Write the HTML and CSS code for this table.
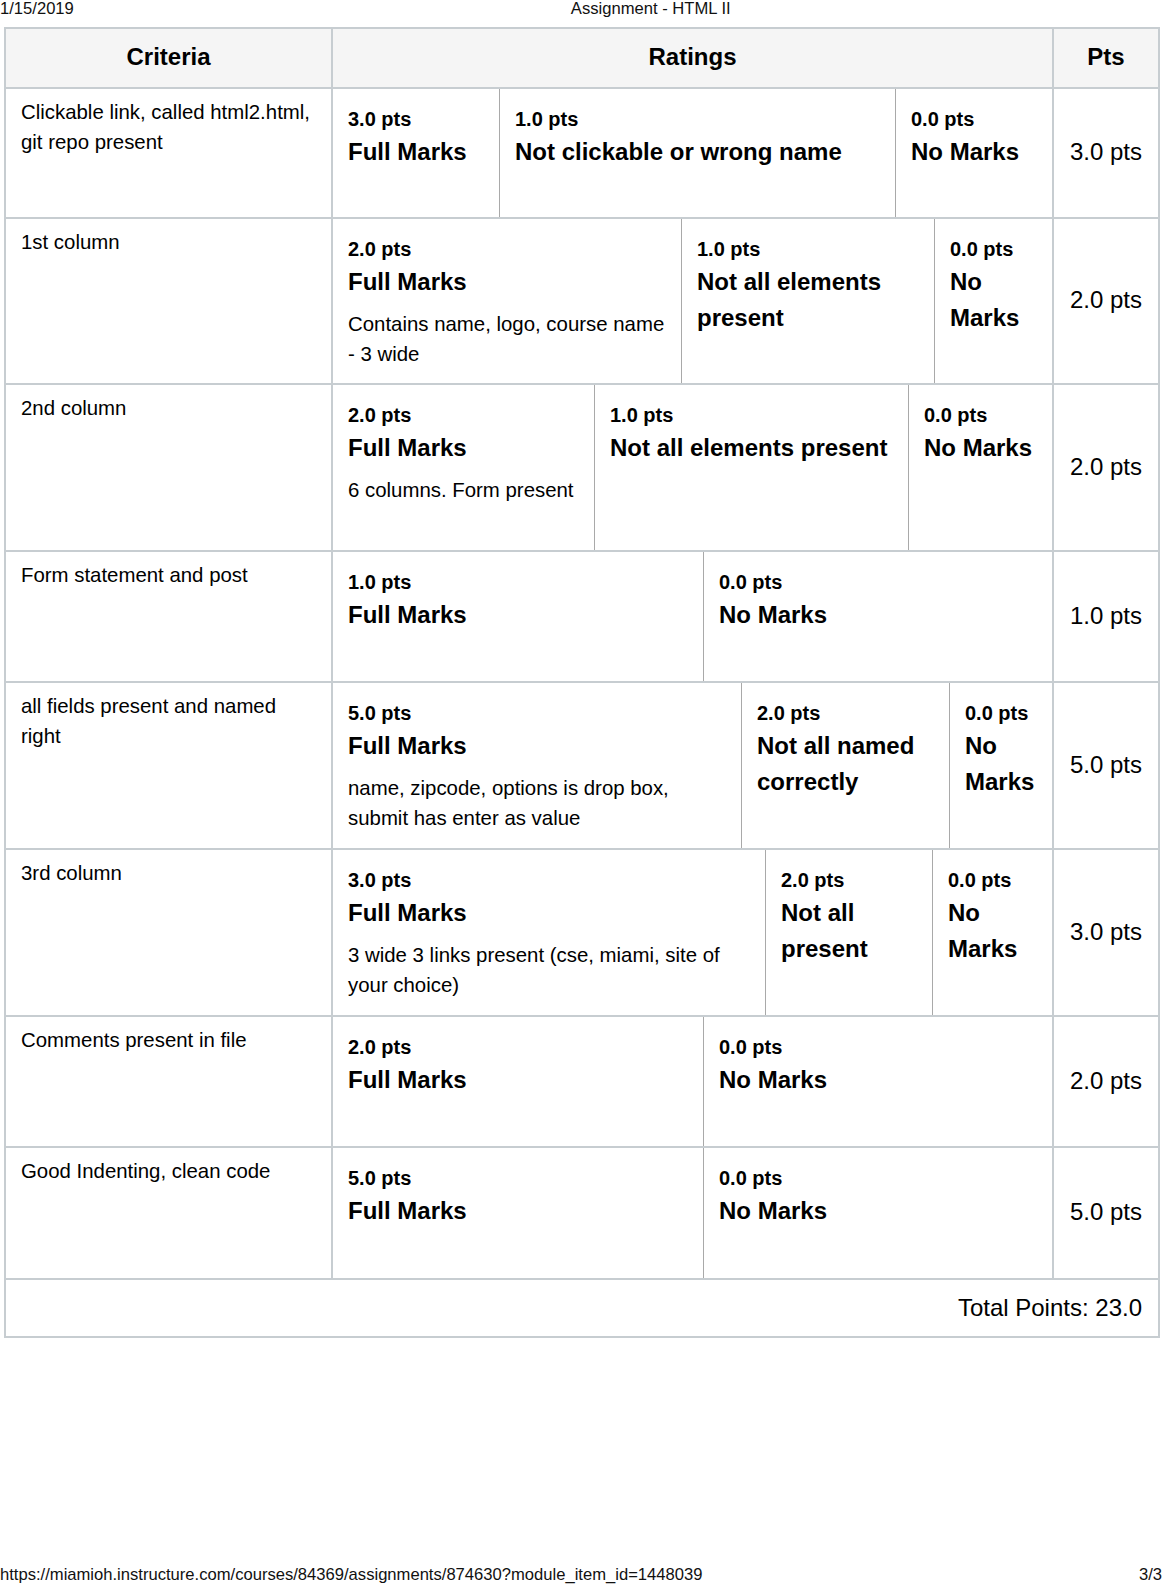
FILE: index.html
```html
<!DOCTYPE html>
<html lang="en">
<head>
<meta charset="utf-8">
<title>Assignment - HTML II</title>
<link rel="stylesheet" href="styles.css">
</head>
<body>
<div class="page">
  <header class="print-header">
    <span class="print-date">1/15/2019</span>
    <span class="print-title">Assignment - HTML II</span>
  </header>

  <div class="rubric">
    <div class="th">Criteria</div>
    <div class="th">Ratings</div>
    <div class="th">Pts</div>

    <div class="crit">Clickable link, called html2.html, git repo present</div>
    <div class="ratings">
      <div class="tier" style="width:167px"><div class="tier-pts">3.0 pts</div><div class="tier-title">Full Marks</div></div>
      <div class="tier" style="width:396px"><div class="tier-pts">1.0 pts</div><div class="tier-title">Not clickable or wrong name</div></div>
      <div class="tier tier-last"><div class="tier-pts">0.0 pts</div><div class="tier-title">No Marks</div></div>
    </div>
    <div class="pts">3.0 pts</div>

    <div class="crit">1st column</div>
    <div class="ratings">
      <div class="tier" style="width:349px"><div class="tier-pts">2.0 pts</div><div class="tier-title">Full Marks</div><div class="tier-long">Contains name, logo, course name - 3 wide</div></div>
      <div class="tier" style="width:253px"><div class="tier-pts">1.0 pts</div><div class="tier-title">Not all elements present</div></div>
      <div class="tier tier-last"><div class="tier-pts">0.0 pts</div><div class="tier-title">No Marks</div></div>
    </div>
    <div class="pts">2.0 pts</div>

    <div class="crit">2nd column</div>
    <div class="ratings">
      <div class="tier" style="width:262px"><div class="tier-pts">2.0 pts</div><div class="tier-title">Full Marks</div><div class="tier-long">6 columns. Form present</div></div>
      <div class="tier" style="width:314px"><div class="tier-pts">1.0 pts</div><div class="tier-title">Not all elements present</div></div>
      <div class="tier tier-last"><div class="tier-pts">0.0 pts</div><div class="tier-title">No Marks</div></div>
    </div>
    <div class="pts">2.0 pts</div>

    <div class="crit">Form statement and post</div>
    <div class="ratings">
      <div class="tier" style="width:371px"><div class="tier-pts">1.0 pts</div><div class="tier-title">Full Marks</div></div>
      <div class="tier tier-last"><div class="tier-pts">0.0 pts</div><div class="tier-title">No Marks</div></div>
    </div>
    <div class="pts">1.0 pts</div>

    <div class="crit">all fields present and named right</div>
    <div class="ratings">
      <div class="tier" style="width:409px"><div class="tier-pts">5.0 pts</div><div class="tier-title">Full Marks</div><div class="tier-long">name, zipcode, options is drop box, submit has enter as value</div></div>
      <div class="tier" style="width:208px"><div class="tier-pts">2.0 pts</div><div class="tier-title">Not all named correctly</div></div>
      <div class="tier tier-last"><div class="tier-pts">0.0 pts</div><div class="tier-title">No Marks</div></div>
    </div>
    <div class="pts">5.0 pts</div>

    <div class="crit">3rd column</div>
    <div class="ratings">
      <div class="tier" style="width:433px"><div class="tier-pts">3.0 pts</div><div class="tier-title">Full Marks</div><div class="tier-long">3 wide 3 links present (cse, miami, site of your choice)</div></div>
      <div class="tier" style="width:167px"><div class="tier-pts">2.0 pts</div><div class="tier-title">Not all present</div></div>
      <div class="tier tier-last"><div class="tier-pts">0.0 pts</div><div class="tier-title">No Marks</div></div>
    </div>
    <div class="pts">3.0 pts</div>

    <div class="crit">Comments present in file</div>
    <div class="ratings">
      <div class="tier" style="width:371px"><div class="tier-pts">2.0 pts</div><div class="tier-title">Full Marks</div></div>
      <div class="tier tier-last"><div class="tier-pts">0.0 pts</div><div class="tier-title">No Marks</div></div>
    </div>
    <div class="pts">2.0 pts</div>

    <div class="crit">Good Indenting, clean code</div>
    <div class="ratings">
      <div class="tier" style="width:371px"><div class="tier-pts">5.0 pts</div><div class="tier-title">Full Marks</div></div>
      <div class="tier tier-last"><div class="tier-pts">0.0 pts</div><div class="tier-title">No Marks</div></div>
    </div>
    <div class="pts">5.0 pts</div>

    <div class="total">Total Points: 23.0</div>
  </div>

  <footer class="print-footer">
    <span>https://miamioh.instructure.com/courses/84369/assignments/874630?module_item_id=1448039</span>
    <span>3/3</span>
  </footer>
</div>
</body>
</html>
```

FILE: styles.css
```css
html, body {
  margin: 0;
  padding: 0;
  background: #ffffff;
}

body {
  font-family: "Liberation Sans", Arial, Helvetica, sans-serif;
  color: #000000;
}

.page {
  height: 1585px;
  display: flex;
  flex-direction: column;
  overflow: hidden;
}

.print-header {
  box-sizing: border-box;
  display: flex;
  height: 27px;
  padding-top: 1px;
  font-size: 16.6px;
  line-height: 16px;
  color: #111;
}

.print-title {
  margin-left: 497px;
}

.rubric {
  display: grid;
  grid-template-columns: 327px 721px 106px;
  grid-template-rows: 60px 130px 166px 167px 131px 167px 167px 131px 132px 58px;
  width: 1154px;
  margin-left: 4px;
  border-top: 2px solid #c7cdd1;
  border-left: 2px solid #c7cdd1;
}

.rubric > div {
  box-sizing: border-box;
  border-right: 2px solid #c7cdd1;
  border-bottom: 2px solid #c7cdd1;
  min-width: 0;
}

.th {
  display: flex;
  align-items: center;
  justify-content: center;
  background: #f5f5f5;
  font-size: 24px;
  font-weight: bold;
  line-height: 36px;
  padding-bottom: 2px;
}

.crit {
  padding: 8px 16px 8px 15px;
  font-size: 20.4px;
  line-height: 30px;
}

.ratings {
  display: flex;
  align-items: stretch;
}

.tier {
  box-sizing: border-box;
  flex: 0 0 auto;
  padding: 15px 12px 10px 15px;
  border-right: 1px solid #a9a9a9;
}

.tier-last {
  flex: 1 1 0;
  border-right: none;
}

.tier-pts {
  font-size: 20px;
  line-height: 30px;
  font-weight: bold;
}

.tier-title {
  font-size: 24px;
  line-height: 36px;
  font-weight: bold;
}

.tier-long {
  margin-top: 10px;
  font-size: 20.4px;
  line-height: 29.5px;
}

.pts {
  display: flex;
  align-items: center;
  justify-content: center;
  padding-bottom: 2px;
  font-size: 24px;
  line-height: 36px;
}

.total {
  grid-column: 1 / -1;
  display: flex;
  align-items: center;
  justify-content: flex-end;
  padding-right: 16px;
  font-size: 24px;
  line-height: 36px;
}

.print-footer {
  margin-top: auto;
  margin-bottom: 2px;
  display: flex;
  justify-content: space-between;
  padding-right: 1px;
  font-size: 16.6px;
  line-height: 16px;
  color: #111;
}
```
